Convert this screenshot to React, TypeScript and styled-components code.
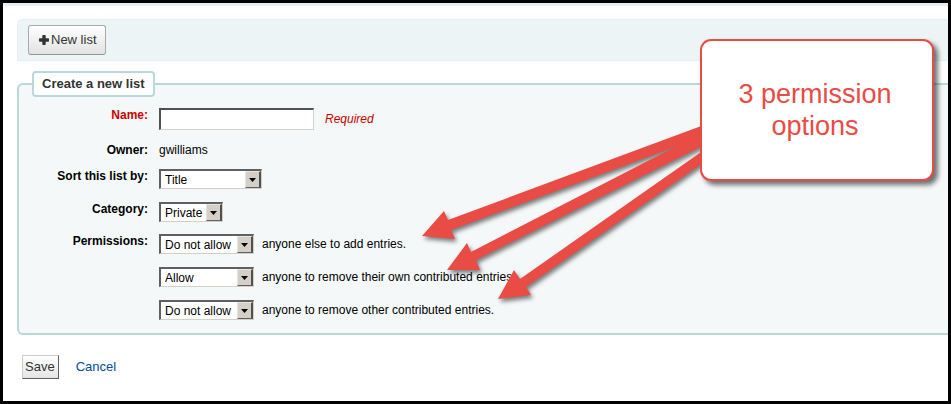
import React from "react";
import styled, { createGlobalStyle } from "styled-components";

const GlobalStyle = createGlobalStyle`
  *, *::before, *::after { box-sizing: border-box; }
  body {
    margin: 0;
    background: #fff;
    color: #000;
    font: 12px/14px "Liberation Sans", Arial, sans-serif;
  }
  button, input, select { font: inherit; color: inherit; margin: 0; }
`;

const Page = styled.div`
  position: relative;
  min-height: 100vh;
  border: 3px solid #000;
  overflow: hidden;
`;

const TopStrip = styled.div`
  height: 3px;
  background: #e6f0f2;
`;

const Main = styled.main`
  padding: 13px 0 12px 14px;
`;

const Toolbar = styled.div`
  display: flex;
  padding: 5px 10px;
  background: #edf4f6;
  border: 1px solid #e6f0f2;
  border-right: 0;
  border-radius: 5px 0 0 0;
`;

const NewButton = styled.button`
  display: flex;
  align-items: center;
  gap: 2px;
  height: 30px;
  padding: 0 8px 0 10px;
  border: 1px solid #aaa;
  border-bottom-color: #949494;
  border-radius: 3px;
  background: linear-gradient(#fff, #e2e2e2);
  color: #333;
  font-size: 13px;
`;

const Fieldset = styled.fieldset`
  min-width: 0;
  margin: 10px 0 0;
  padding: 11px 0 13px;
  border: 2px solid #b9d8d9;
  border-right: 0;
  border-radius: 6px 0 0 6px;
  background: #f4f8f9;
`;

const Legend = styled.legend`
  margin-left: 13px;
  padding: 4px 8px;
  border: 2px solid #b9d8d9;
  border-radius: 4px;
  background: #fff;
  color: #333;
  font-size: 13px;
  font-weight: bold;
  line-height: 14px;
`;

const Row = styled.div<{ $gap?: number }>`
  display: grid;
  grid-template-columns: 129px 1fr;
  column-gap: 11px;
  align-items: start;
  margin-bottom: ${({ $gap = 13 }) => $gap}px;
  &:last-child { margin-bottom: 0; }
`;

const Label = styled.label<{ $required?: boolean }>`
  font-weight: bold;
  text-align: right;
  color: ${({ $required }) => ($required ? "#c00" : "#000")};
`;

const RowTitle = styled.span`
  font-weight: bold;
  text-align: right;
`;

const Lines = styled.div`
  display: grid;
  gap: 13px;
`;

const Line = styled.div`
  display: flex;
  align-items: center;
  gap: 8px;
`;

const TextInput = styled.input`
  width: 155px;
  height: 22px;
  padding: 1px 4px;
  border: 2px solid #d4d0c8;
  border-width: 2px 1px 1px 2px;
  border-top-color: #505050;
  border-left-color: #505050;
  background: #fff;
`;

const Required = styled.span`
  margin-left: 3px;
  color: #c00;
  font-style: italic;
`;

const SelectBox = styled.span<{ $width: number }>`
  display: grid;
  grid-template-columns: 1fr 16px;
  width: ${({ $width }) => $width}px;
  height: 20px;
  border: 1px solid #d4d0c8;
  border-top: 2px solid #606060;
  border-left: 2px solid #606060;
  background: #fff;
`;

const NativeSelect = styled.select`
  grid-area: 1 / 1 / 2 / 3;
  width: 100%;
  height: 100%;
  padding: 0 0 0 4px;
  appearance: none;
  border: 0;
  border-radius: 0;
  background: transparent;
`;

const Chevron = styled.span`
  grid-area: 1 / 2;
  display: flex;
  align-items: center;
  justify-content: center;
  border: 1px solid #e8e5de;
  border-right: 2px solid #505050;
  border-bottom-color: #606060;
  background: #d4d0c8;
  pointer-events: none;
`;

const Actions = styled.div`
  display: flex;
  align-items: center;
  gap: 17px;
  margin: 20px 0 0 5px;
  font-size: 13px;
`;

const SaveButton = styled.button`
  height: 24px;
  padding: 0 3px 0 2px;
  border: 1px solid #ccc;
  border-right-color: #606060;
  border-bottom-color: #606060;
  background: linear-gradient(#fff, #e4e4e4);
  color: #333;
`;

const Cancel = styled.a`
  color: #004d99;
  text-decoration: none;
`;

const Annotation = styled.div`
  position: absolute;
  top: -3px;
  left: -3px;
  pointer-events: none;
`;

const Arrows = styled.svg`
  display: block;
  filter: drop-shadow(2px 3px 2px rgba(0, 0, 0, 0.5));
`;

const Callout = styled.div`
  position: absolute;
  top: 39px;
  left: 700px;
  display: flex;
  align-items: center;
  justify-content: center;
  width: 234px;
  height: 142px;
  padding: 0 32px 0 28px;
  border: 2px solid #e94b45;
  border-radius: 11px;
  background: #fff;
  box-shadow: 4px 4px 5px rgba(0, 0, 0, 0.55);
  color: #e94b45;
  font-size: 27px;
  line-height: 32px;
  text-align: center;
`;

interface DropDownProps {
  id?: string;
  label?: string;
  width: number;
  value: string;
  options: string[];
}

function DropDown({ id, label, width, value, options }: DropDownProps) {
  return (
    <SelectBox $width={width}>
      <NativeSelect id={id} aria-label={label} defaultValue={value}>
        {options.map((option) => (
          <option key={option}>{option}</option>
        ))}
      </NativeSelect>
      <Chevron>
        <svg width="7" height="4" viewBox="0 0 7 4" aria-hidden="true">
          <path d="M0 0h7L3.5 4z" fill="#000" />
        </svg>
      </Chevron>
    </SelectBox>
  );
}

const permissions = [
  { value: "Do not allow", text: "anyone else to add entries." },
  { value: "Allow", text: "anyone to remove their own contributed entries." },
  { value: "Do not allow", text: "anyone to remove other contributed entries." },
];

export default function App() {
  return (
    <Page>
      <GlobalStyle />
      <TopStrip />
      <Main>
        <Toolbar>
          <NewButton type="button">
            <svg width="10" height="10" viewBox="0 0 10 10" aria-hidden="true">
              <path
                d="M4 0h2q.7 0 .7.7v2.6h2.6q.7 0 .7.7v2q0 .7-.7.7H6.700v2.600q0 .7-.7.7H4q-.7 0-.7-.7V6.700H.7Q0 6.700 0 6V4q0-.7.7-.7h2.600V.7Q3.300 0 4 0z"
                fill="#333"
              />
            </svg>
            New list
          </NewButton>
        </Toolbar>
        <form onSubmit={(event) => event.preventDefault()}>
          <Fieldset>
            <Legend>Create a new list</Legend>
            <Row>
              <Label htmlFor="name" $required>Name:</Label>
              <Line>
                <TextInput id="name" type="text" required />
                <Required>Required</Required>
              </Line>
            </Row>
            <Row $gap={12}>
              <RowTitle>Owner:</RowTitle>
              <span>gwilliams</span>
            </Row>
            <Row>
              <Label htmlFor="sort">Sort this list by:</Label>
              <DropDown id="sort" width={103} value="Title" options={["Title", "Author", "Copyrightdate", "Call number"]} />
            </Row>
            <Row $gap={12}>
              <Label htmlFor="category">Category:</Label>
              <DropDown id="category" width={64} value="Private" options={["Private", "Public"]} />
            </Row>
            <Row>
              <RowTitle>Permissions:</RowTitle>
              <Lines>
                {permissions.map(({ value, text }) => (
                  <Line key={text}>
                    <DropDown label={text} width={95} value={value} options={["Allow", "Do not allow"]} />
                    <span>{text}</span>
                  </Line>
                ))}
              </Lines>
            </Row>
          </Fieldset>
          <Actions>
            <SaveButton type="submit">Save</SaveButton>
            <Cancel href="#lists">Cancel</Cancel>
          </Actions>
        </form>
      </Main>
      <Annotation>
        <Arrows width="720" height="330" viewBox="0 0 720 330" fill="#e94b45" aria-hidden="true">
          <path d="M422 236L444 211L448 220L704 125V136L451 230L455 239z" />
          <path d="M447 270L467 243L471 252L704 132V145L476 260L480 270z" />
          <path d="M498 299L514 270L520 279L704 150V162L526 287L531 295z" />
        </Arrows>
        <Callout>3 permission options</Callout>
      </Annotation>
    </Page>
  );
}
